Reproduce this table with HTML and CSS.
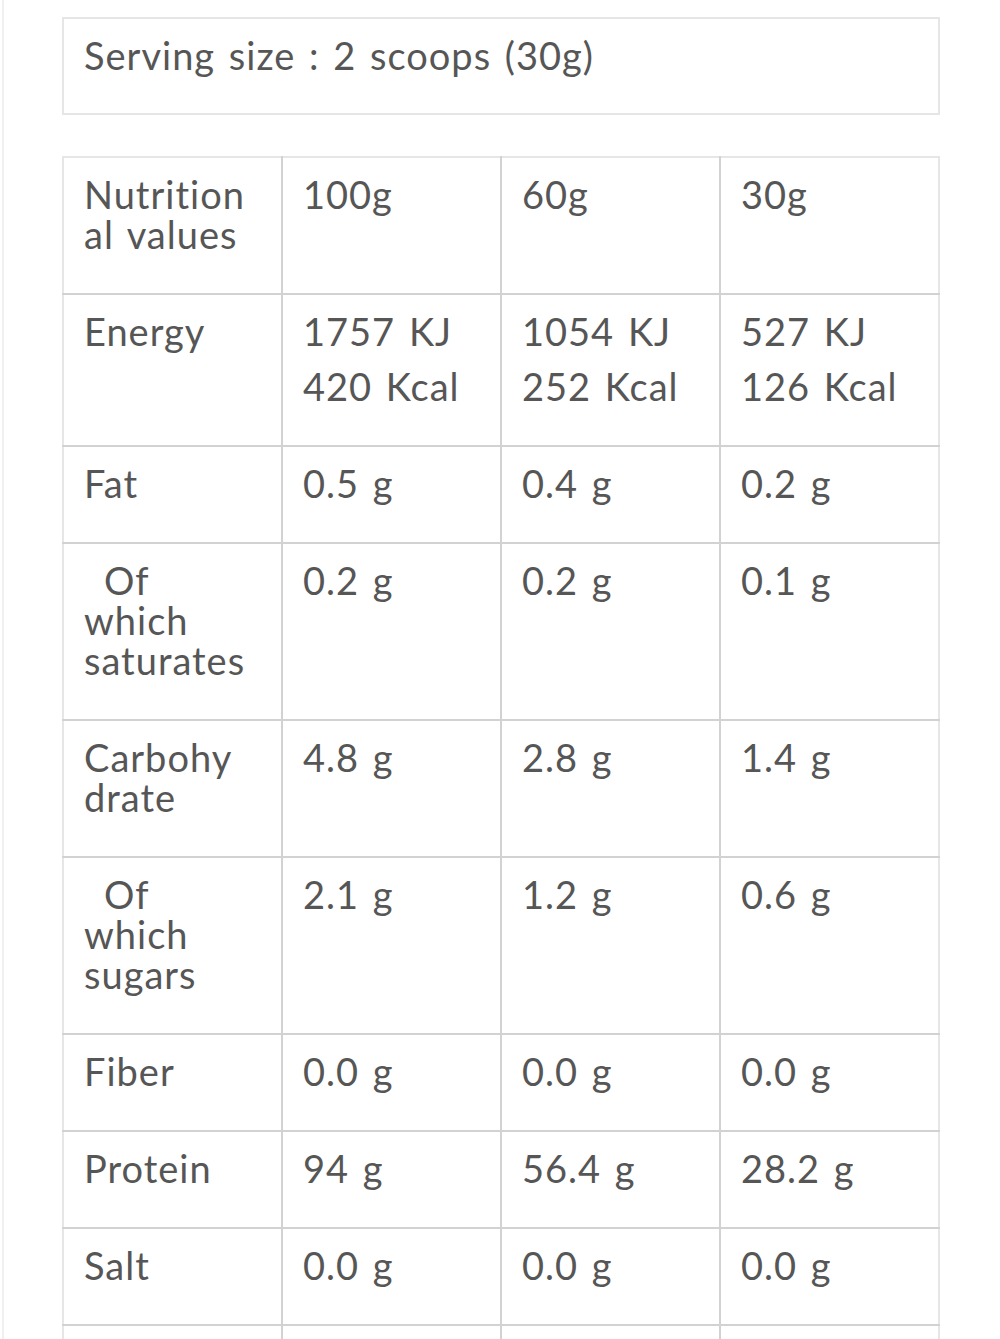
FILE: index.html
```html
<!DOCTYPE html>
<html>
<head>
<meta charset="utf-8">
<link rel="stylesheet" href="styles.css">
</head>
<body>
<div class="page">
  <div class="serving">Serving size : 2 scoops (30g)</div>
  <table class="nutri">
    <tr><td>Nutrition<br>al values</td><td>100g</td><td>60g</td><td>30g</td></tr>
    <tr><td>Energy</td><td><p>1757 KJ</p><p>420 Kcal</p></td><td><p>1054 KJ</p><p>252 Kcal</p></td><td><p>527 KJ</p><p>126 Kcal</p></td></tr>
    <tr><td>Fat</td><td>0.5 g</td><td>0.4 g</td><td>0.2 g</td></tr>
    <tr><td><span class="indent">Of</span><br>which<br>saturates</td><td>0.2 g</td><td>0.2 g</td><td>0.1 g</td></tr>
    <tr><td>Carbohy<br>drate</td><td>4.8 g</td><td>2.8 g</td><td>1.4 g</td></tr>
    <tr><td><span class="indent">Of</span><br>which<br>sugars</td><td>2.1 g</td><td>1.2 g</td><td>0.6 g</td></tr>
    <tr><td>Fiber</td><td>0.0 g</td><td>0.0 g</td><td>0.0 g</td></tr>
    <tr><td>Protein</td><td>94 g</td><td>56.4 g</td><td>28.2 g</td></tr>
    <tr><td>Salt</td><td>0.0 g</td><td>0.0 g</td><td>0.0 g</td></tr>
    <tr><td>&nbsp;</td><td>&nbsp;</td><td>&nbsp;</td><td>&nbsp;</td></tr>
  </table>
</div>
</body>
</html>
```
FILE: styles.css
```css
html, body {
  margin: 0;
  padding: 0;
  background: #fff;
}
body {
  height: 1339px;
  overflow: hidden;
  font-family: "Lato", "Liberation Sans", sans-serif;
  color: #565656;
}
.page {
  margin-left: 2px;
  border-left: 2px solid #f0f0f0;
  min-height: 1339px;
  padding: 17px 0 0 58px;
  box-sizing: border-box;
}
.serving {
  width: 878px;
  height: 98px;
  box-sizing: border-box;
  border: 2px solid #e6e6e6;
  padding: 16px 20px 0 20px;
  font-size: 38px;
  line-height: 40px;
  letter-spacing: 1px;
  word-spacing: 3px;
}
.nutri {
  margin-top: 41px;
  width: 878px;
  border-collapse: collapse;
  table-layout: fixed;
  border: 2px solid #e6e6e6;
  font-size: 38px;
  line-height: 40px;
  letter-spacing: 1px;
  word-spacing: 3px;
}
.nutri td {
  width: 25%;
  vertical-align: top;
  border: 2px solid #d2d2d2;
  padding: 16px 20px 39px 20px;
  box-sizing: border-box;
}
.nutri tr:first-child td { border-top-color: #e6e6e6; }
.nutri td:first-child { border-left-color: #e6e6e6; }
.nutri td:last-child { border-right-color: #e6e6e6; }
.indent {
  padding-left: 20px;
}
.nutri p {
  margin: 0;
}
.nutri p + p {
  margin-top: 15px;
}
```
